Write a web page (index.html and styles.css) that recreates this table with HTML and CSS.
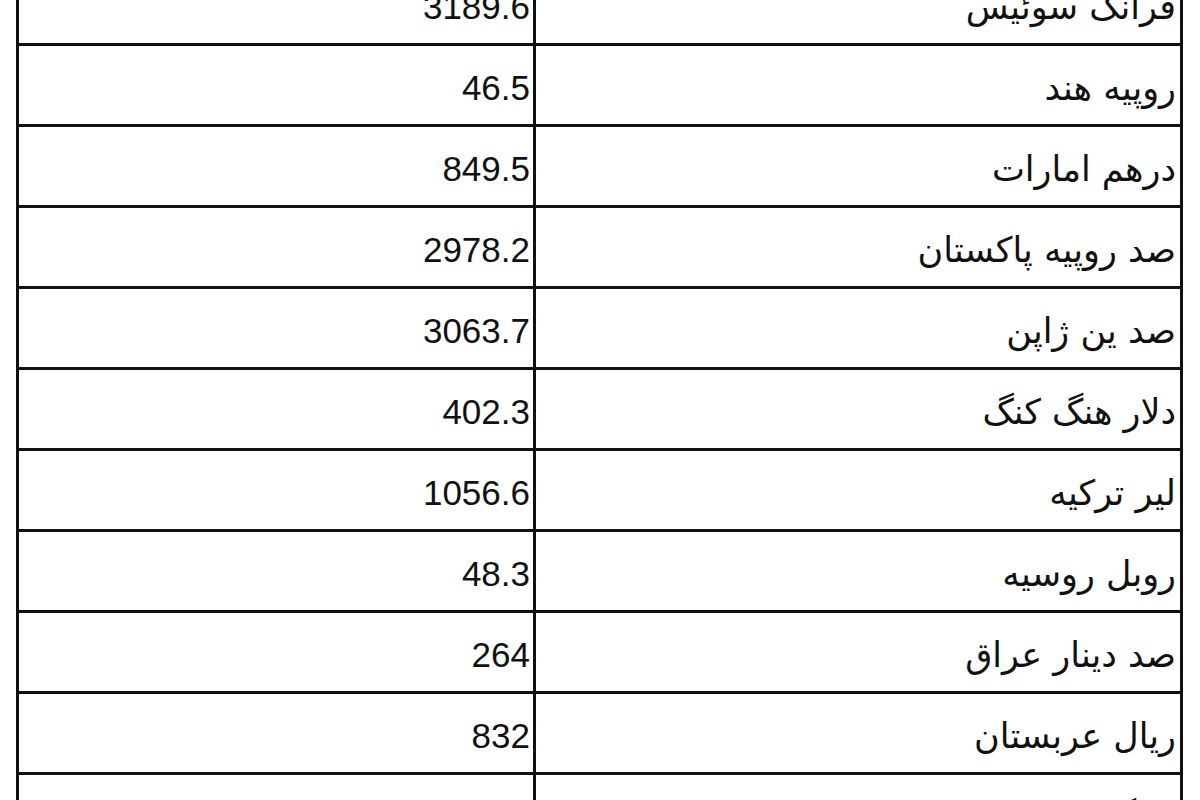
FILE: index.html
```html
<!DOCTYPE html>
<html lang="fa">
<head>
<meta charset="utf-8">
<title>نرخ ارز</title>
<link rel="stylesheet" href="styles.css">
</head>
<body>
<table class="rates">
  <tbody>
    <tr><td class="num">3189.6</td><td class="name" dir="rtl">فرانک سوئیس</td></tr>
    <tr><td class="num">46.5</td><td class="name" dir="rtl">روپیه هند</td></tr>
    <tr><td class="num">849.5</td><td class="name" dir="rtl">درهم امارات</td></tr>
    <tr><td class="num">2978.2</td><td class="name" dir="rtl">صد روپیه پاکستان</td></tr>
    <tr><td class="num">3063.7</td><td class="name" dir="rtl">صد ین ژاپن</td></tr>
    <tr><td class="num">402.3</td><td class="name" dir="rtl">دلار هنگ کنگ</td></tr>
    <tr><td class="num">1056.6</td><td class="name" dir="rtl">لیر ترکیه</td></tr>
    <tr><td class="num">48.3</td><td class="name" dir="rtl">روبل روسیه</td></tr>
    <tr><td class="num">264</td><td class="name" dir="rtl">صد دینار عراق</td></tr>
    <tr><td class="num">832</td><td class="name" dir="rtl">ریال عربستان</td></tr>
    <tr><td class="num">203.4</td><td class="name" dir="rtl">رینگیت مالزی</td></tr>
  </tbody>
</table>
</body>
</html>
```

FILE: styles.css
```css
html, body {
  margin: 0;
  padding: 0;
  background: #ffffff;
  overflow: hidden;
}

body {
  font-family: "Liberation Sans", "DejaVu Sans", sans-serif;
  color: #111111;
}

.rates {
  border-collapse: collapse;
  margin: -38px 0 0 16px;
  width: 1167px;
  table-layout: fixed;
}

.rates td {
  border: 3px solid #111111;
  height: 81px;
  padding: 5px 3px 0 3px;
  box-sizing: border-box;
  vertical-align: middle;
  font-size: 35px;
  line-height: 40px;
  white-space: nowrap;
}

.rates td.num {
  width: 517px;
  text-align: right;
}

.rates td.name {
  text-align: right;
  padding-right: 4px;
  font-family: "DejaVu Sans", sans-serif;
  font-size: 35px;
}
```
